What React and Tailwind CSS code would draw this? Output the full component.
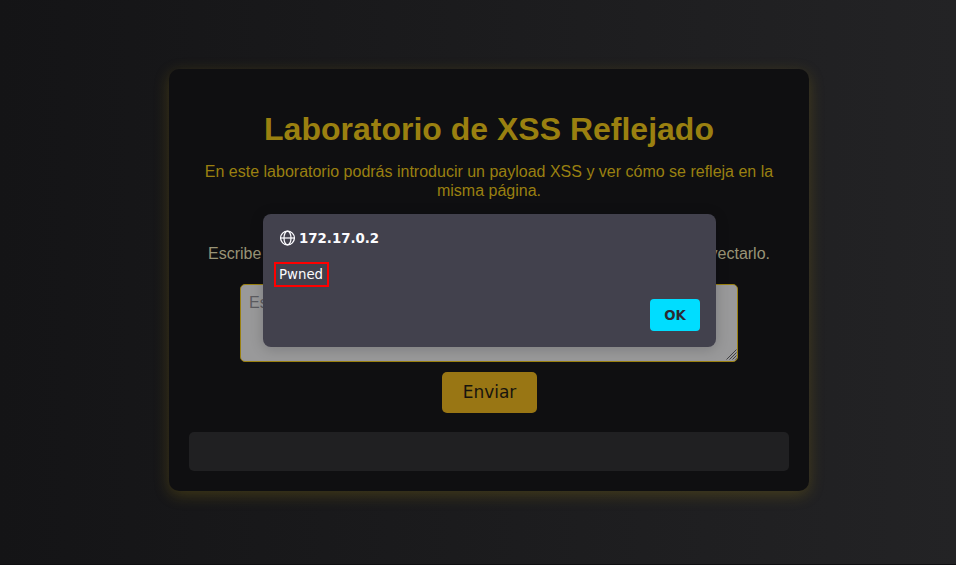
const sans = "font-['Liberation_Sans',Arial,sans-serif]";

function GlobeIcon() {
  return (
    <svg className="ml-px" width="15" height="16" viewBox="0 0 15 16" fill="none" stroke="#fbfbfe" strokeWidth="1.25">
      <circle cx="7.5" cy="8" r="6.9" />
      <ellipse cx="7.5" cy="8" rx="3.5" ry="6.9" />
      <path d="M0.6 8h13.8" />
    </svg>
  );
}

function AlertDialog() {
  return (
    <div className="absolute left-[263px] top-[214px] flex h-[133px] w-[453px] flex-col rounded-lg bg-[#42414d] pl-4 pr-4 pt-4 font-['DejaVu_Sans',sans-serif] text-[#fbfbfe] shadow-[0_2px_14px_rgba(12,12,13,0.2)]">
      <div className="flex h-4 items-center gap-1 text-[13.33px] font-bold leading-4">
        <GlobeIcon />
        <span className="pt-0.5">172.17.0.2</span>
      </div>
      <div className="-ml-[5px] mt-4 flex h-[25px] w-[55px] items-center border-2 border-[#ff0000] pl-[3px] text-[13.33px] leading-none">
        Pwned
      </div>
      <button className="mt-3 h-8 w-[50px] self-end rounded bg-[#00ddff] pt-px text-[13.33px] font-bold leading-8 text-[#2b2a33]">
        OK
      </button>
    </div>
  );
}

export default function App() {
  return (
    <div className={"relative flex h-[565px] w-[956px] flex-col overflow-hidden bg-linear-to-r from-[#141416] to-[#232325] " + sans}>
      <main className="ml-[169px] mt-[69px] flex h-[422px] w-[640px] flex-col items-center rounded-[10px] bg-[#0f0f11] px-5 pt-[42px] shadow-[0_4px_15px_rgba(154,128,16,0.3)]">
        <h1 className="text-[32px] font-bold leading-[37px] text-[#9a8010]">Laboratorio de XSS Reflejado</h1>
        <p className="mt-[14px] w-[600px] px-2 text-center text-base leading-[19px] text-[#9a8010]">
          En este laboratorio podrás introducir un payload XSS y ver cómo se refleja en la misma página.
        </p>
        <div className="mt-[44px] flex w-[562px] justify-between text-base leading-[19px] text-[#999477]">
          <span>Escribe</span>
          <span>inyectarlo.</span>
        </div>
        <div className="mt-[21px] flex h-[78px] w-[498px] shrink-0 items-start justify-between rounded-[5px] border border-[#9a8010] bg-[#99999a] pl-2 text-base leading-[19px] text-[#5c5c60]">
          <span className="mt-2">Escribe</span>
          <svg className="self-end" width="11" height="12" viewBox="0 0 11 12" stroke="#3f3f42" strokeWidth="1">
            <path d="M0.5 10.5l10-10M3.5 10.5l7-7M6.5 10.5l4-4M9.5 10.5l1-1" />
          </svg>
        </div>
        <button className="mt-[10px] h-[41px] w-[95px] shrink-0 rounded-[5px] bg-[#997614] pl-px pt-px font-['DejaVu_Sans',sans-serif] text-[17px] text-[#17140e]">
          Enviar
        </button>
        <div className="mt-[19px] h-[39px] w-[600px] shrink-0 rounded-[5px] bg-[#202022]" />
      </main>
      <div className="mt-auto h-px bg-[#0f0f11]" />
      <AlertDialog />
    </div>
  );
}
